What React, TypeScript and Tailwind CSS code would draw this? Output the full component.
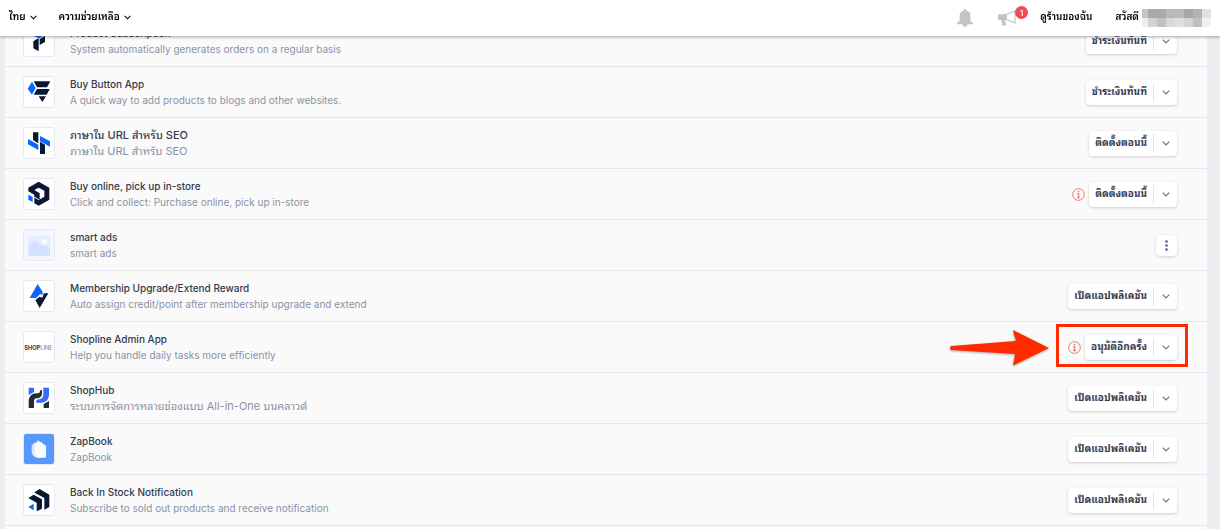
import type { ReactNode } from "react";

const NAVY = "#0a1733";
const BLUE = "#0b66ff";

function Logo({ children }: { children: ReactNode }) {
  return (
    <svg viewBox="0 0 90 90" className="size-[30px]" aria-hidden="true">
      {children}
    </svg>
  );
}

const logos: Record<string, ReactNode> = {
  subscription: (
    <Logo>
      <path d="M28 12 62 12 62 27 46 37 28 30Z" fill={BLUE} />
      <path d="M47 39 63 30V48L47 57Z" fill={NAVY} />
      <path d="M28 46 44 36V76L28 67Z" fill={NAVY} />
    </Logo>
  ),
  buyButton: (
    <Logo>
      <path d="M24 14 35 33 24 53 11 35Z" fill={BLUE} />
      <path d="M29 13H79L69 31H39Z" fill={NAVY} />
      <path d="M39 36H77L68 53H29Z" fill={NAVY} />
      <path d="M44 58H66L55 75Z" fill={NAVY} />
    </Logo>
  ),
  seo: (
    <Logo>
      <path d="M27 13H43V46L27 36Z" fill={NAVY} />
      <path d="M48 41 63 50V78H48Z" fill={NAVY} />
      <path d="M12 33 43 50V66L12 49Z" fill={BLUE} />
      <path d="M48 24 78 40V56L48 40Z" fill={BLUE} />
    </Logo>
  ),
  pickup: (
    <Logo>
      <path d="M44 8 76 26V62L44 80 31 73V56L44 63 61 53V35L44 26 31 33 47 43V62L31 53V47L13 37V26Z" fill={NAVY} />
      <path d="M13 47 26 54V69L13 62Z" fill={BLUE} />
    </Logo>
  ),
  placeholder: (
    <Logo>
      <rect width="90" height="90" fill="#f1f6ff" />
      <rect x="13" y="17" width="65" height="60" rx="5" fill="#e5eeff" />
      <path d="M13 47C25 31 36 31 44 40 52 49 57 46 64 47 71 48 75 51 78 54V70Q78 77 71 77H20Q13 77 13 70Z" fill="#d3e2fe" />
      <circle cx="61" cy="35" r="8" fill="#fafcff" />
    </Logo>
  ),
  membership: (
    <Logo>
      <path d="M41 9 56 33V43L49 39 36 51H17Z" fill={BLUE} />
      <path d="M34 57 47 47 55 50 60 37H73L47 81Z" fill={NAVY} />
    </Logo>
  ),
  shopline: (
    <Logo>
      <text x="1" y="53" fontSize="17" fontFamily="Inter, sans-serif" fill="#33434d">
        <tspan fontWeight="700">SHOP</tspan>
        <tspan fontWeight="300">LINE</tspan>
      </text>
    </Logo>
  ),
  shopHub: (
    <Logo>
      <path d="M14 14H30V27L14 36Z" fill="#376bfa" />
      <path d="M14 75V56C14 41 23 31 38 31H42C47 31 48 27 48 22H54V30C54 41 48 46 38 46C32 46 30 51 30 56V75Z" fill="#232c39" />
      <path d="M58 14H75V34C75 50 66 59 52 59H36C36 52 40 49 46 49 54 48 58 42 58 34Z" fill="#376bfa" />
      <path d="M59 63 75 54V75H59Z" fill="#232c39" />
    </Logo>
  ),
  zapBook: (
    <Logo>
      <rect width="90" height="90" fill="#5698fd" />
      <path d="M23 34 34 25H55V71H42C30 71 23 63 23 51Z" fill="#d9e8ff" />
      <path d="M32 27 40 28 41 19 66 35V71H47C37 71 32 63 32 53Z" fill="#f8fbff" />
    </Logo>
  ),
  backInStock: (
    <Logo>
      <path d="M32 21 47 12 76 29V66L61 74V39L32 23Z" fill={NAVY} />
      <path d="M14 38 29 29 54 43V71L38 79V53L14 40Z" fill={NAVY} />
      <path d="M29 56V76L13 66Z" fill={BLUE} />
    </Logo>
  ),
};

type App = {
  logo: string;
  title: string;
  subtitle: string;
  action?: string;
  warning?: boolean;
  highlighted?: boolean;
};

const apps: App[] = [
  { logo: "subscription", title: "Product Subscription", subtitle: "System automatically generates orders on a regular basis", action: "ชำระเงินทันที" },
  { logo: "buyButton", title: "Buy Button App", subtitle: "A quick way to add products to blogs and other websites.", action: "ชำระเงินทันที" },
  { logo: "seo", title: "ภาษาใน URL สำหรับ SEO", subtitle: "ภาษาใน URL สำหรับ SEO", action: "ติดตั้งตอนนี้" },
  { logo: "pickup", title: "Buy online, pick up in-store", subtitle: "Click and collect: Purchase online, pick up in-store", action: "ติดตั้งตอนนี้", warning: true },
  { logo: "placeholder", title: "smart ads", subtitle: "smart ads" },
  { logo: "membership", title: "Membership Upgrade/Extend Reward", subtitle: "Auto assign credit/point after membership upgrade and extend", action: "เปิดแอปพลิเคชัน" },
  { logo: "shopline", title: "Shopline Admin App", subtitle: "Help you handle daily tasks more efficiently", action: "อนุมัติอีกครั้ง", warning: true, highlighted: true },
  { logo: "shopHub", title: "ShopHub", subtitle: "ระบบการจัดการหลายช่องแบบ All-in-One บนคลาวด์", action: "เปิดแอปพลิเคชัน" },
  { logo: "zapBook", title: "ZapBook", subtitle: "ZapBook", action: "เปิดแอปพลิเคชัน" },
  { logo: "backInStock", title: "Back In Stock Notification", subtitle: "Subscribe to sold out products and receive notification", action: "เปิดแอปพลิเคชัน" },
];

// Thai glyphs read smaller than Latin ones, so Thai lines are one size up.
const lineSize = (text: string) => (/[\u0E00-\u0E7F]/.test(text) ? "text-[11px] leading-4" : "text-[10px] leading-4");

function Chevron({ className }: { className: string }) {
  return (
    <svg viewBox="0 0 8 5" className={className} fill="none" stroke="currentColor" aria-hidden="true">
      <path d="m.7.7 3.3 3.3L7.3.7" strokeWidth="1.2" />
    </svg>
  );
}

function WarningIcon() {
  return (
    <svg viewBox="0 0 12 12" className="mr-1 size-[13px] text-[#ee776d]" fill="none" stroke="currentColor" role="img" aria-label="Warning">
      <circle cx="6" cy="6" r="5.4" strokeWidth="0.9" />
      <path d="M5 5.2H6V8.800M4.800 8.800H7.200" strokeWidth="1.200" />
      <circle cx="6" cy="3.3" r="0.8" fill="currentColor" stroke="none" />
    </svg>
  );
}

function SplitButton({ label }: { label: string }) {
  return (
    <div className="flex h-[25px] items-center rounded bg-white text-[#343c52] shadow-[0_1px_3px_rgba(0,0,0,0.18)]">
      <button type="button" className="h-full pr-1.5 pb-0.5 pl-1.5 text-[10px] leading-4 font-bold whitespace-nowrap">
        {label}
      </button>
      <button type="button" aria-label="More" className="flex h-[19px] w-6 items-center justify-center border-l border-[#e3e6ef] text-[#68738f]">
        <Chevron className="h-[5px] w-2" />
      </button>
    </div>
  );
}

function AppRow({ app }: { app: App }) {
  return (
    <li className="relative flex h-[51px] items-center border-b border-[#e4e7f0] pr-[30px] pl-[18px]">
      <div className="flex size-8 shrink-0 items-center justify-center overflow-hidden rounded-[3px] border border-[#e6e9f1] bg-white">
        {logos[app.logo]}
      </div>
      <div className="ml-[15px] min-w-0 flex-1">
        <h3 className={`truncate font-medium text-[#343b4c] ${lineSize(app.title)}`}>{app.title}</h3>
        <p className={`truncate text-[#8a92a6] ${lineSize(app.subtitle)}`}>{app.subtitle}</p>
      </div>
      {app.warning && <WarningIcon />}
      {app.action ? (
        <SplitButton label={app.action} />
      ) : (
        <button type="button" aria-label="Options" className="flex size-[21px] items-center justify-center rounded bg-white text-[#56638a] shadow-[0_1px_3px_rgba(0,0,0,0.18)]">
          <svg viewBox="0 0 3 11" className="h-[11px] w-[3px]" fill="currentColor" aria-hidden="true">
            <circle cx="1.5" cy="1.5" r="1.35" />
            <circle cx="1.5" cy="5.5" r="1.35" />
            <circle cx="1.5" cy="9.5" r="1.35" />
          </svg>
        </button>
      )}
      {app.highlighted && (
        <>
          <div className="pointer-events-none absolute top-0.5 right-[19px] h-[43px] w-[132px] border-[3px] border-[#ff2a00]" />
          <svg viewBox="0 0 102 42" className="pointer-events-none absolute top-1.5 right-[157px] h-[42px] w-[102px] drop-shadow-[0_1px_1px_rgba(0,0,0,0.35)]" aria-hidden="true">
            <path d="M3 18C2 18.500 2 21.500 3 22L67 26Q66 32 65 37.500L101 20 65 2Q66 8 68 12.500 67 13 55 14Z" fill="#ff2a00" />
          </svg>
        </>
      )}
    </li>
  );
}

const mosaic = [
  ["#c4c4c4", "#a9a9a9", "#aaaaaa", "#b9b9b9", "#bababa", "#a8a8a8", "#b2b2b2", "#e2e2e2"],
  ["#ececec", "#d3d3d3", "#c1c1c1", "#d9d9d9", "#dfdfdf", "#d4d4d4", "#c0c0c0", "#f0f0f0"],
];

function Header() {
  return (
    <header className="fixed inset-x-0 top-0 z-10 flex h-9 items-center justify-between bg-white pr-2 pl-[9px] text-[10px] leading-4 font-semibold text-black shadow-[0_1px_3px_rgba(0,0,0,0.35)]">
      <nav className="flex items-center gap-[22px]">
        <button type="button" className="flex items-center gap-1 pb-1">
          ไทย <Chevron className="mt-0.5 h-[5px] w-[7px]" />
        </button>
        <button type="button" className="flex items-center gap-1 pb-1">
          ความช่วยเหลือ <Chevron className="mt-0.5 h-[5px] w-[7px]" />
        </button>
      </nav>
      <div className="flex items-center">
        <button type="button" aria-label="Notifications" className="text-[#c4c4c4]">
          <svg viewBox="0 0 18 18" className="size-[18px]" fill="currentColor" aria-hidden="true">
            <path d="M9 0c.8 0 1.300.500 1.300 1.400C13 2 14.400 4 14.400 7v4.200c0 1.100 1.700 1.600 2.600 3v1H1v-1c.9-1.400 2.600-1.900 2.600-3V7c0-3 1.400-5 4.100-5.600C7.700.500 8.200 0 9 0ZM6.500 15.200h5c-.5 1.900-1.400 2.500-2.500 2.500S7 17.100 6.500 15.200Z" />
          </svg>
        </button>
        <button type="button" aria-label="Announcements, 1 new" className="relative ml-6 text-[#c4c4c4]">
          <svg viewBox="0 0 20 16" className="h-4 w-5" fill="currentColor" aria-hidden="true">
            <path d="M0 4.500 9 3.800v6.500L7 10.100 8.300 15.500H4.500L3.200 10 0 9.800Z" />
            <path d="M9 4.300 17 1v12L9 9.800" fill="none" stroke="currentColor" strokeWidth="1.200" />
          </svg>
          <span className="absolute -top-1 left-[17px] flex size-[13px] items-center justify-center rounded-full bg-[#f04b57] text-[8px] leading-none font-medium text-white">1</span>
        </button>
        <a href="#store" className="ml-[22px] pb-1">ดูร้านของฉัน</a>
        <a href="#account" className="ml-[23px] flex items-center">
          <span className="pb-1">สวัสดี</span>
          <svg viewBox="0 0 70 18" className="ml-[3px] h-[18px] w-[70px]" shapeRendering="crispEdges" aria-hidden="true">
            {mosaic.map((row, r) => row.map((c, i) => <rect key={`${r}-${i}`} x={i * 9 - (i ? 3 : 0)} y={r * 9} width={i ? 9 : 6} height="9" fill={c} />))}
          </svg>
        </a>
      </div>
    </header>
  );
}

export default function App() {
  return (
    <div className="min-h-screen bg-[#ebedf0] font-[Inter,'Noto_Sans_Thai_Looped',Loma,'Noto_Sans',sans-serif]">
      <Header />
      <main className="flex min-h-screen pt-4 pr-[13px] pl-[5px]">
        <ul className="min-w-0 flex-1 bg-[#fafafa]">
          {apps.map((app) => (
            <AppRow key={app.title} app={app} />
          ))}
        </ul>
      </main>
    </div>
  );
}
